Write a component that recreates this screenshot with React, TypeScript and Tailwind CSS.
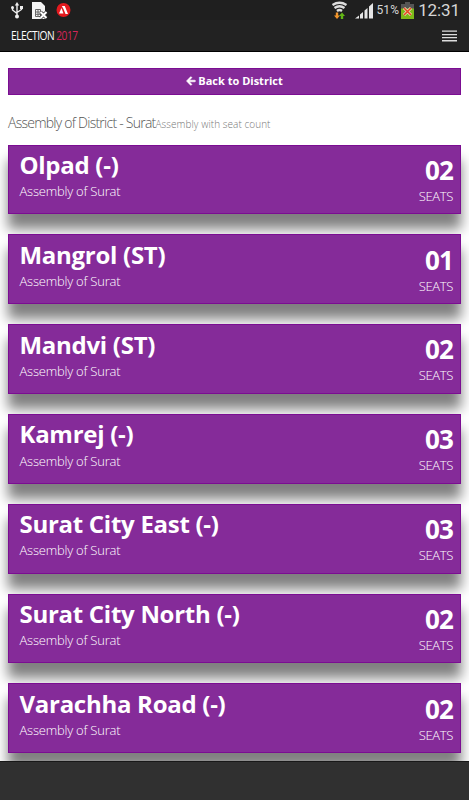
import { FaArrowLeft } from 'react-icons/fa';

interface Assembly {
  name: string;
  seats: string;
}

const assemblies: Assembly[] = [
  { name: 'Olpad (-)', seats: '02' },
  { name: 'Mangrol (ST)', seats: '01' },
  { name: 'Mandvi (ST)', seats: '02' },
  { name: 'Kamrej (-)', seats: '03' },
  { name: 'Surat City East (-)', seats: '03' },
  { name: 'Surat City North (-)', seats: '02' },
  { name: 'Varachha Road (-)', seats: '02' },
];

function StatusBar() {
  return (
    <div className="flex h-5 items-center justify-between bg-[#1f1f1f] pl-2.5 pr-[9px] font-['Roboto',sans-serif] text-[#d6d6d6]">
      <div className="flex items-center">
        {/* USB */}
        <svg width="14" height="18" viewBox="0 0 14 18" fill="none" stroke="#eee" strokeWidth="1.4">
          <path d="M7 3v12M2.5 7v2L7 12.500M11.5 6v2.500L7 11.500" />
          <path d="M4.8 4.500L7 1l2.200 3.500z" fill="#eee" stroke="none" />
          <circle cx="7" cy="15.500" r="2" fill="#eee" stroke="none" />
          <circle cx="2.500" cy="6.500" r="1.500" fill="#eee" stroke="none" />
          <path d="M10 5h3v3h-3z" fill="#eee" stroke="none" />
        </svg>
        {/* SIM card */}
        <svg className="ml-2" width="17" height="18" viewBox="0 0 17 18">
          <path d="M0 1h9l4 4v13H0z" fill="#f4f4f4" />
          <path d="M3.500 8.500h5v7h-5zM6 8.500v7M3.500 11h5M3.500 13.300h5" fill="none" stroke="#666" />
          <path d="M8.500 11l6 6M14.500 11l-6 6" stroke="#333" strokeWidth="3.500" />
          <path d="M8.500 11l6 6M14.500 11l-6 6" stroke="#fff" strokeWidth="2" />
        </svg>
        {/* App notification */}
        <svg className="ml-[7px]" width="15" height="16" viewBox="0 0 15 16">
          <circle cx="7.500" cy="8" r="7" fill="#e3191e" />
          <path d="M5.800 4h3l3.200 8H9.500L7.500 7z" fill="#fff" />
          <path d="M5.500 6L3 11.500h4.500z" fill="#fff" />
        </svg>
      </div>
      <div className="flex items-center">
        <svg width="17" height="19" viewBox="0 0 17 19" fill="none">
          <path d="M1.500 4q7-4.500 14 0M3.500 7q5-3.500 10 0M6 10q2.500-2 5 0" stroke="#ddd" strokeWidth="2.300" />
          <path d="M6 18l-3-3.500h1.800V11.500h2.400v3H9z" fill="#f0932b" />
          <path d="M11 11.500l3 3.500h-1.800v3H9.800v-3H8z" fill="#62b515" />
        </svg>
        <svg className="ml-[7px]" width="19" height="17" viewBox="0 0 19 17" fill="#e5e5e5">
          <path d="M0 16.500l4-3v3zM5 12.500l3-2.500v6.500H5zM9.500 8.500L12.500 6v10.500h-3zM14 4.500l4-3.500v15.500h-4z" />
        </svg>
        <span className="ml-[2px] text-[12px] leading-5 tracking-[0.15px]">51%</span>
        <svg className="ml-0.5" width="13" height="17" viewBox="0 0 13 17">
          <path d="M4 0h5v2h4v15H0V2h4z" fill="#555" />
          <path d="M0 6.500h13V17H0z" fill="#7cb918" />
          <path d="M3 6l7 7M10 6l-7 7" stroke="#f4ddc0" strokeWidth="3" />
          <path d="M3 6l7 7M10 6l-7 7" stroke="#e34a24" strokeWidth="1.600" />
        </svg>
        <span className="ml-[4px] text-[17px] leading-5 tracking-[-0.1px]">12:31</span>
      </div>
    </div>
  );
}

function NavBar() {
  return (
    <header className="flex h-8 items-center justify-between border-b border-black bg-[#222] pl-[11px] pr-3">
      <h1 className="origin-left scale-x-[0.85] text-[12px] leading-4 tracking-[-0.6px] text-white">
        ELECTION <span className="text-[#d6265a]">2017</span>
      </h1>
      <svg width="15" height="12" viewBox="0 0 15 12" fill="#ddd">
        <path d="M0 0.500h15v1.200H0zM0 4h15v1.200H0zM0 7h15v1.200H0zM0 10h15v1.500H0z" />
      </svg>
    </header>
  );
}

function AssemblyCard({ assembly }: { assembly: Assembly }) {
  return (
    <div className="flex h-[69.8px] justify-between border border-[#7b0d92] bg-[#852b99] pl-[10.5px] pr-[7px] shadow-[0_15px_12px_#808080]">
      <div>
        <h3 className="mt-[3.4px] text-[24px] font-bold leading-8 tracking-[-0.28px] text-white">{assembly.name}</h3>
        <p className="mt-[1.2px] text-[13px] font-light leading-[18px] tracking-[-0.22px] text-white">Assembly of Surat</p>
      </div>
      <div className="text-right">
        <div className="mt-[10.2px] text-[26px] font-bold leading-7 tracking-[-0.9px] text-white">{assembly.seats}</div>
        <div className="mt-0.5 text-[13px] font-light leading-5 tracking-[-0.35px] text-white">SEATS</div>
      </div>
    </div>
  );
}

export default function App() {
  return (
    <div className="flex h-[800px] w-[469px] flex-col overflow-hidden bg-white font-['Open_Sans',sans-serif]">
      <StatusBar />
      <NavBar />
      <main className="h-[709px] overflow-hidden px-2 pt-4">
        <button className="flex h-[26.5px] w-full items-center justify-center gap-0.5 border border-[#7b0d92] bg-[#852b99] text-[11px] font-bold text-white">
          <FaArrowLeft className="text-[10px]" stroke="currentColor" strokeWidth="30" />
          Back to District
        </button>
        <div className="mt-[17px] h-[33.2px] whitespace-nowrap leading-5">
          <span className="text-[14px] font-light tracking-[-0.75px] text-[#555]">Assembly of District - Surat</span>
          <span className="text-[10px] font-light tracking-[0.06px] text-[#777]">Assembly with seat count</span>
        </div>
        <div className="flex flex-col gap-5">
          {assemblies.map((a) => (
            <AssemblyCard key={a.name} assembly={a} />
          ))}
        </div>
      </main>
      <footer className="flex-1 border-t border-[#181818] bg-[#303030]" />
    </div>
  );
}
